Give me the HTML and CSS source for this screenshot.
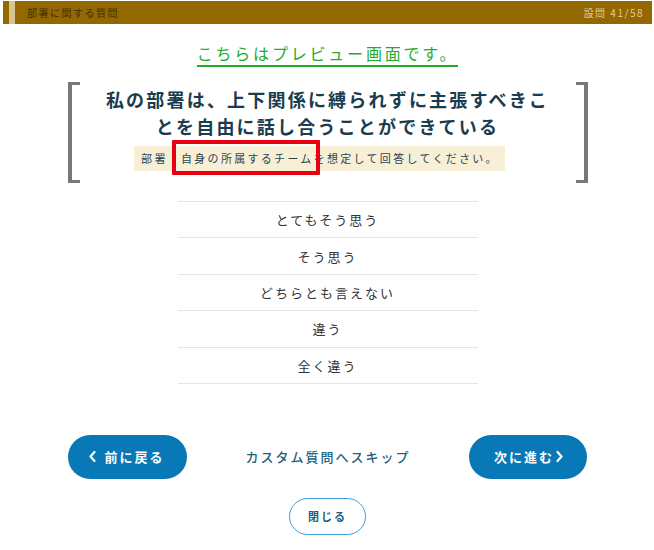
FILE: index.html
```html
<!DOCTYPE html>
<html lang="ja">
<head>
    <meta charset="UTF-8">
    <meta name="viewport" content="width=device-width, initial-scale=1.0">
    <title>設問 41/58</title>
    <link rel="stylesheet" href="styles.css">
</head>
<body>
    <div class="survey">
        <div class="survey-header">
            <div class="survey-category">部署に関する質問</div>
            <div class="survey-count">設問 41/58</div>
        </div>

        <div class="survey-body">
            <div class="preview-note">
                <span class="preview-note-text">こちらはプレビュー画面です。</span>
            </div>

            <!-- 設問本文（左右にカッコ） -->
            <div class="question">
                <div class="bracket bracket-left"></div>
                <div class="question-inner">
                    <h1 class="question-text">私の部署は、上下関係に縛られずに主張すべきことを自由に話し合うことができている</h1>
                    <p class="question-hint">部署：<span class="hint-mark">自身の所属するチーム</span>を想定して回答してください。</p>
                </div>
                <div class="bracket bracket-right"></div>
            </div>

            <ul class="answers">
                <li class="answer">とてもそう思う</li>
                <li class="answer">そう思う</li>
                <li class="answer">どちらとも言えない</li>
                <li class="answer">違う</li>
                <li class="answer">全く違う</li>
            </ul>

            <div class="nav">
                <button class="nav-button nav-prev">
                    <svg class="chevron chevron-left" width="7" height="11" viewBox="0 0 7 11"><polyline points="5.5,1 1.5,5.5 5.5,10" fill="none" stroke="#fff" stroke-width="2.2" stroke-linecap="round" stroke-linejoin="round"/></svg>
                    前に戻る
                </button>
                <a class="skip-link" href="#">カスタム質問へスキップ</a>
                <button class="nav-button nav-next">
                    次に進む
                    <svg class="chevron chevron-right" width="7" height="11" viewBox="0 0 7 11"><polyline points="1.5,1 5.5,5.5 1.5,10" fill="none" stroke="#fff" stroke-width="2.2" stroke-linecap="round" stroke-linejoin="round"/></svg>
                </button>
            </div>

            <div class="close-row">
                <button class="close-button">閉じる</button>
            </div>
        </div>
    </div>
</body>
</html>
```

FILE: styles.css
```css
* {
    margin: 0;
    padding: 0;
    box-sizing: border-box;
}

body {
    font-family: "Noto Sans CJK JP", "Noto Sans", sans-serif;
    background: #fff;
    color: #333;
}

.survey {
    padding: 1px 2px 0 3px;
}

/* ヘッダー：左端に帯のアクセント */
.survey-header {
    height: 23px;
    display: flex;
    justify-content: space-between;
    align-items: center;
    padding: 0 8px 0 24px;
    background: linear-gradient(to right, #946800 0 6px, #d9c38f 6px 12px, #946800 12px);
    font-size: 10px;
    letter-spacing: 1.5px;
}

.survey-category {
    color: #3e2f06;
}

.survey-count {
    color: #e2cd98;
}

.survey-body {
    display: flex;
    flex-direction: column;
    align-items: center;
}

.preview-note {
    margin-top: 17px;
}

.preview-note-text {
    display: inline-block;
    font-size: 16px;
    line-height: 20px;
    letter-spacing: 2.8px;
    color: #21ad2b;
    padding-bottom: 2px;
    border-bottom: 2px solid #21ad2b;
}

/* 設問 */
.question {
    display: flex;
    width: 520px;
    margin-top: 15px;
}

.bracket {
    width: 12px;
    border: solid #787878;
    border-width: 3px 0 3px 4px;
}

.bracket-right {
    border-width: 3px 4px 3px 0;
}

.question-inner {
    flex: 1;
    display: flex;
    flex-direction: column;
    align-items: center;
    padding: 4px 0 12px;
}

.question-text {
    width: 452px;
    font-size: 18px;
    line-height: 27px;
    letter-spacing: 2.2px;
    font-weight: 700;
    color: #1b3c4e;
    text-align: center;
}

.question-hint {
    margin: 6px 16px 0 0;
    padding: 0 6px 0 7px;
    line-height: 25px;
    font-size: 11px;
    letter-spacing: 2.3px;
    background: #f8f0d6;
    color: #2f4350;
}

.hint-mark {
    position: relative;
}

/* 赤枠の強調 */
.hint-mark::after {
    content: "";
    position: absolute;
    left: -9px;
    right: -6px;
    top: -10px;
    bottom: -9px;
    border: 4px solid #e60012;
    border-radius: 1px;
}

/* 選択肢 */
.answers {
    list-style: none;
    width: 300px;
    margin-top: 18px;
    border-top: 1px solid #e6e6e6;
}

.answer {
    height: 36.4px;
    display: flex;
    align-items: center;
    justify-content: center;
    font-size: 13px;
    letter-spacing: 2px;
    color: #333;
    border-bottom: 1px solid #e6e6e6;
}

/* 前後ボタン */
.nav {
    width: 520px;
    margin-top: 51px;
    display: flex;
    justify-content: space-between;
    align-items: center;
}

.nav-button {
    width: 119px;
    height: 44px;
    border: none;
    border-radius: 22px;
    background: #0879b6;
    color: #fff;
    font-family: inherit;
    font-size: 13px;
    font-weight: 700;
    letter-spacing: 2px;
    display: flex;
    align-items: center;
    justify-content: center;
    cursor: pointer;
}

.nav-next {
    width: 118px;
}

.chevron-left {
    margin-right: 8px;
}

.chevron-right {
    margin-left: 2px;
}

.skip-link {
    font-size: 13px;
    letter-spacing: 2px;
    font-weight: 500;
    color: #225f80;
    text-decoration: none;
}

.close-row {
    margin-top: 19px;
}

.close-button {
    width: 77px;
    height: 37px;
    border: 1px solid #3f9fd2;
    border-radius: 19px;
    background: #fff;
    color: #1f5a79;
    font-family: inherit;
    font-size: 11px;
    font-weight: 700;
    letter-spacing: 2px;
    cursor: pointer;
}
```
